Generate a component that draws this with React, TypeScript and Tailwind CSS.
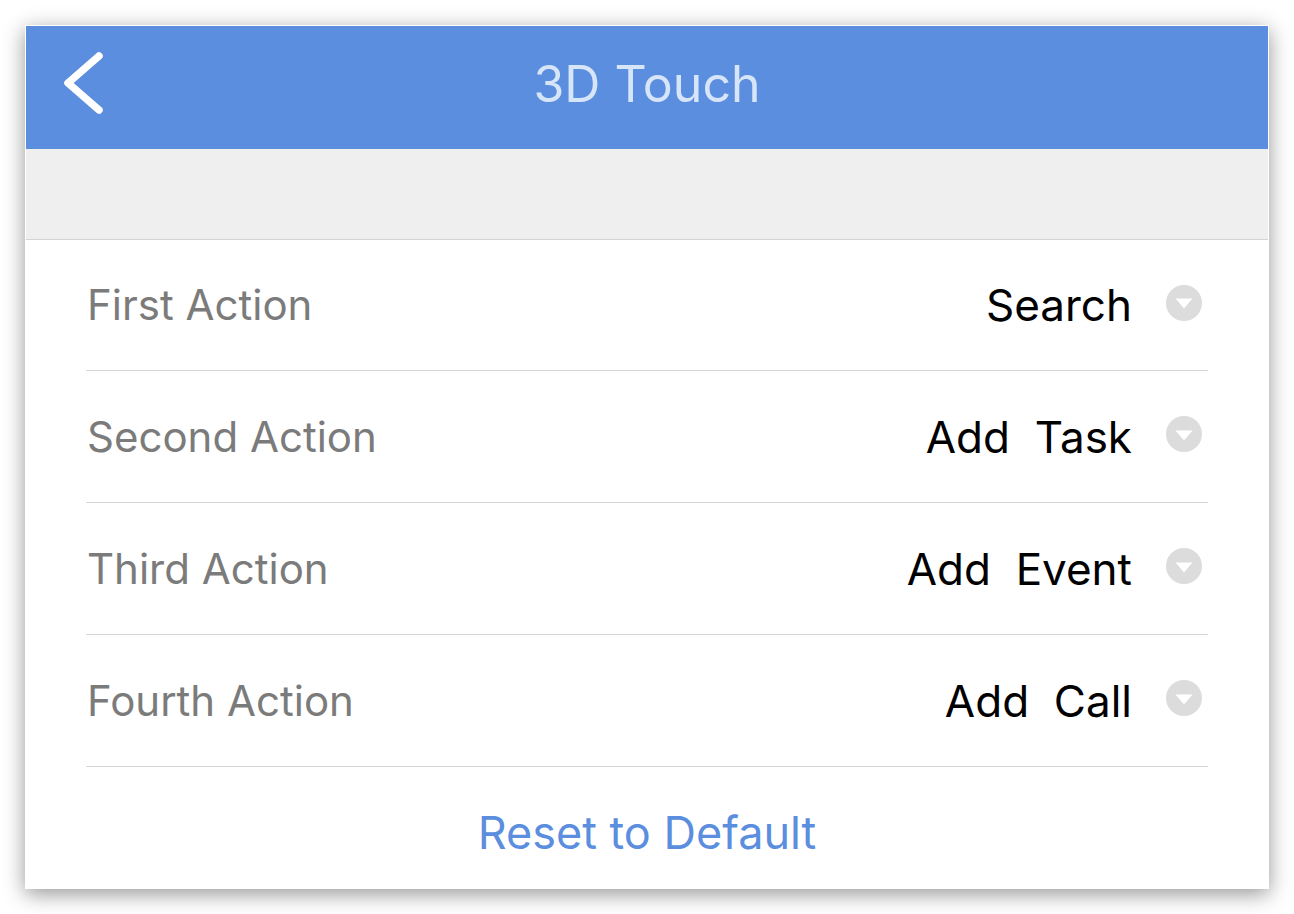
import React from 'react';

interface ActionRowProps {
    label: string;
    value: string;
    first?: boolean;
}

function DropdownDot() {
    return (
        <div className="w-9 h-9 rounded-full bg-[#dcdcdc] flex items-center justify-center mb-[5px]">
            <svg width="18" height="11" viewBox="0 0 18 11" className="mt-[2px]">
                <path d="M0.5 0.5 L17.5 0.5 L9 10.5 Z" fill="#ffffff"/>
            </svg>
        </div>
    );
}

function ActionRow(props: ActionRowProps) {
    const {label, value, first} = props;
    return (
        <div className={(first ? 'h-[131px]' : 'h-[132px]') + ' flex items-center justify-between border-b border-[#d6d6d6]'}>
            <p className="text-[42px] leading-none text-[#7b7b7b] pl-[1px]">{label}</p>
            <div className="flex items-center gap-[34px] pr-[6px]">
                <p className="text-[44px] leading-none text-black whitespace-pre">{value}</p>
                <DropdownDot/>
            </div>
        </div>
    );
}

const actions: Array<ActionRowProps> = [
    {label: 'First Action', value: 'Search', first: true},
    {label: 'Second Action', value: 'Add  Task'},
    {label: 'Third Action', value: 'Add  Event'},
    {label: 'Fourth Action', value: 'Add  Call'},
];

export default function App() {
    return (
        <div className="min-h-screen bg-white p-[25px]" style={{fontFamily: 'Inter, "Noto Sans", sans-serif'}}>
            <div className="w-[1244px] h-[864px] border border-white bg-white flex flex-col shadow-[0_5px_20px_rgba(0,0,0,0.42)]">
                <div className="h-[123px] bg-[#5b8ede] grid grid-cols-[1fr_auto_1fr] items-center pb-[7px]">
                    <div className="pl-[36px]">
                        <svg width="44" height="66" viewBox="0 0 44 66">
                            <path d="M37 5 L6 32 L37 59" fill="none" stroke="#ffffff" strokeWidth="7.5" strokeLinecap="round" strokeLinejoin="round"/>
                        </svg>
                    </div>
                    <p className="text-[50px] leading-none text-[#d7e5f9]">3D Touch</p>
                    <div/>
                </div>
                <div className="h-[91px] bg-[#efefef] border-b border-[#d4d4d4]"/>
                <div className="mx-[60px] flex flex-col">
                    {actions.map((action) => (
                        <ActionRow key={action.label} label={action.label} value={action.value} first={action.first}/>
                    ))}
                </div>
                <div className="flex-1 flex items-center justify-center pt-[10px]">
                    <p className="text-[45px] leading-none text-[#5b8ede]">Reset to Default</p>
                </div>
            </div>
        </div>
    );
}
